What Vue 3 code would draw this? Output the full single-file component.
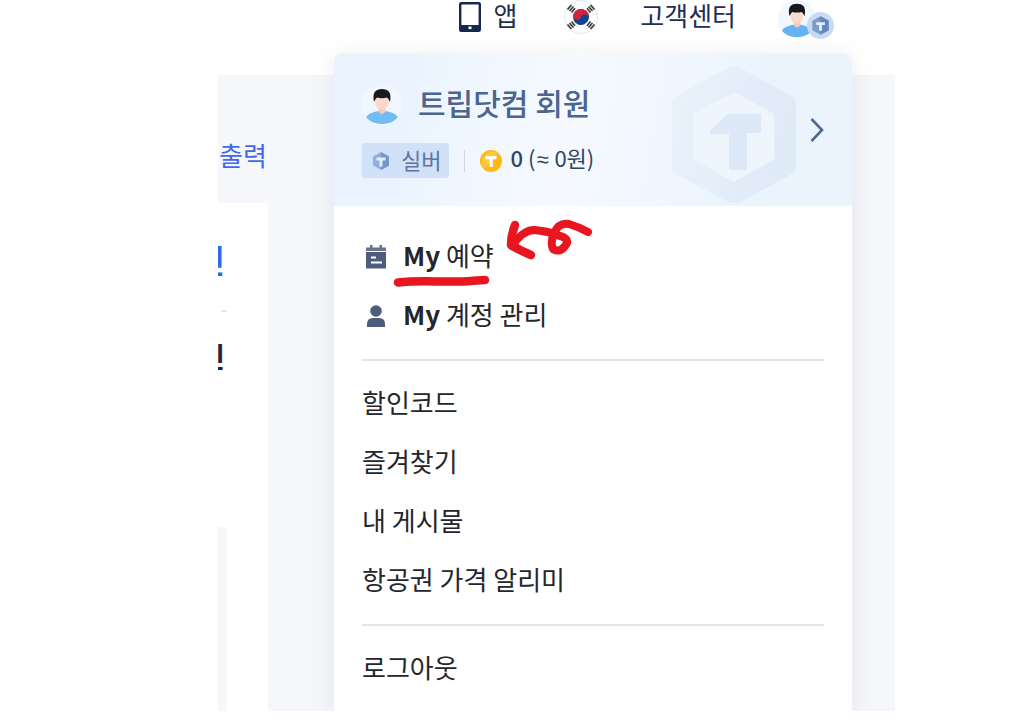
<script setup>
const primary = [
  { icon: 'calendar', brand: 'My', label: '예약' },
  { icon: 'person', brand: 'My', label: '계정 관리' },
]
const secondary = ['할인코드', '즐겨찾기', '내 게시물', '항공권 가격 알리미']
</script>

<template>
  <div class="stage">
    <header class="topbar">
      <a class="top-link app" href="#">
        <svg class="tablet" viewBox="0 0 22 30" aria-hidden="true">
          <rect x="1.2" y="1.2" width="19.6" height="27.6" rx="1" fill="#fff" stroke="#14284e" stroke-width="2.4" />
          <path d="M1 23h20v6H1z" fill="#14284e" />
          <rect x="9.5" y="24.5" width="3" height="2.6" fill="#fff" />
        </svg>
        <span>앱</span>
      </a>
      <button class="flag" type="button" aria-label="한국어">
        <svg viewBox="0 0 34 34" aria-hidden="true">
          <circle cx="17" cy="17" r="16.5" fill="#fdfdfd" stroke="#e6e7e9" />
          <g transform="rotate(20 17 17)">
            <circle cx="17" cy="17" r="8" fill="#134392" />
            <path d="M9 17a8 8 0 0 1 16 0a4 4 0 0 0-8 0a4 4 0 0 1-8 0z" fill="#d9213c" />
          </g>
          <g stroke="#3c3c3c" stroke-width="1.7">
            <path d="M3.5 9.5l4-4.5M5.5 11l4-4.5M7.5 12.5l3.5-4.2" />
            <path d="M30.5 9.5l-4-4.5M28.5 11l-4-4.5M26.5 12.5l-3.5-4.2" />
            <path d="M3.5 24.5l4 4.5M5.5 23l4 4.5M7.5 21.5l3.5 4.2" />
            <path d="M30.5 24.5l-4 4.5M28.5 23l-4 4.5M26.5 21.5l-3.5 4.2" />
          </g>
        </svg>
      </button>
      <a class="top-link" href="#">고객센터</a>
      <button class="account" type="button" aria-label="내 계정">
        <svg class="avatar" viewBox="0 0 40 40" aria-hidden="true">
          <circle cx="20" cy="20" r="20" fill="#f1f7fe" />
          <path d="M4 32c3-4 8-5 12-6h8c4 1 9 2 12 6c-4 5-10 7-16 7s-12-2-16-7z" fill="#64b3f3" />
          <path d="M16.5 20h7v6.500q-3.500 5-7 0z" fill="#f5c8b8" />
          <ellipse cx="20" cy="16.5" rx="6.8" ry="8.5" fill="#fbd9cc" />
          <path d="M12 17C10 7 14 4 20 4s10 3 8 13c-1-2-1.500-3-3-4.500c-3 1-7 1-10 0c-1.500 1.500-2 2.500-3 4.500z" fill="#17191e" />
        </svg>
        <svg class="badge" viewBox="0 0 28 28" aria-hidden="true">
          <circle cx="14" cy="14" r="14" fill="#c9daf4" />
          <path d="M14 4.500l8.500 4.700v9.600L14 23.500l-8.500-4.700V9.200z" fill="#7b9cca" />
          <path d="M14 4.500l8.500 4.700v9.600L14 23.500z" fill="#6588bb" />
          <path d="M9.500 10.500h9v3h-3v6h-3v-6h-3z" fill="#e4edfa" />
        </svg>
      </button>
    </header>

    <main class="page">
      <div class="print"><a href="#">출력</a></div>
      <section class="card">
        <p class="cut blue"><span>인</span></p>
        <p class="dash"></p>
        <p class="cut dark"><span>인</span></p>
        <p class="strip"></p>
      </section>
    </main>

    <aside class="menu">
      <a class="member" href="#">
        <svg class="watermark" viewBox="0 0 130 140" aria-hidden="true">
          <defs>
            <linearGradient id="ring" x1="0" y1="0" x2="1" y2="0.3">
              <stop offset="0" stop-color="#e4edf9" stop-opacity=".5" />
              <stop offset="1" stop-color="#dde8f6" stop-opacity=".8" />
            </linearGradient>
          </defs>
          <path d="M65 2q4-1 8 2l50 27q4 3 4 7v64q0 4-4 7l-50 27q-8 4-16 0L7 109q-4-3-4-7V38q0-4 4-7L57 4q4-3 8-2z" fill="url(#ring)" />
          <path d="M65 27l40 22v45L65 117L24 94V49z" fill="#eff5fd" />
          <path d="M41 65l18-16h33v19H78v37H60V69H41z" fill="#dde9f6" />
        </svg>
        <div class="identity">
          <svg class="avatar" viewBox="0 0 40 40" aria-hidden="true">
            <circle cx="20" cy="20" r="20" fill="#f1f7fe" />
            <path d="M4 32c3-4 8-5 12-6h8c4 1 9 2 12 6c-4 5-10 7-16 7s-12-2-16-7z" fill="#72bbf5" />
            <path d="M16.5 20h7v6.500q-3.500 5-7 0z" fill="#f5c8b8" />
            <ellipse cx="20" cy="16.5" rx="6.8" ry="8.5" fill="#fbd9cc" />
            <path d="M12 17C10 7 14 4 20 4s10 3 8 13c-1-2-1.500-3-3-4.500c-3 1-7 1-10 0c-1.500 1.500-2 2.500-3 4.500z" fill="#17191e" />
          </svg>
          <strong>트립닷컴 회원</strong>
        </div>
        <div class="status">
          <span class="tier">
            <svg viewBox="0 0 18 20" aria-hidden="true">
              <path d="M9 1l8 4.500v9L9 19l-8-4.500v-9z" fill="#93b0dc" />
              <path d="M9 1l8 4.500v9L9 19z" fill="#7596c7" />
              <path d="M4.500 6.500h9v3h-3v6h-3v-6h-3z" fill="#e4eefb" />
            </svg>
            <span class="text">실버</span>
          </span>
          <span class="bar"></span>
          <span class="coins">
            <svg viewBox="0 0 22 22" aria-hidden="true">
              <circle cx="11" cy="11" r="11" fill="#fdb813" />
              <path d="M4 19A11 11 0 0 1 18 3z" fill="#ffc93a" />
              <path d="M5.500 6h11v3.300h-3.700V17H9.500V9.300h-4z" fill="#fff" />
            </svg>
            <span class="text"><b>0</b> (<span class="approx">≈</span> 0원)</span>
          </span>
        </div>
        <svg class="chevron" viewBox="0 0 14 26" aria-hidden="true">
          <path d="M1.500 2L12 13L1.500 24" fill="none" stroke="#4f6a92" stroke-width="2.600" />
        </svg>
      </a>

      <nav class="links">
        <a v-for="item in primary" :key="item.icon" class="row" href="#">
          <svg v-if="item.icon === 'calendar'" class="icon" viewBox="0 0 22 24" aria-hidden="true">
            <path d="M1 2.500h4V0h2.500v2.500h7V0H17v2.500h4V6H1z" fill="#65738f" />
            <path d="M1 7h20v16.500H1z" fill="#4d5d7e" />
            <path d="M6 12.500h5M6 17.500h11" stroke="#fff" stroke-width="2.200" />
          </svg>
          <svg v-else class="icon" viewBox="0 0 22 24" aria-hidden="true">
            <circle cx="11" cy="7" r="5.8" fill="#4d5d7e" />
            <path d="M2 23v-3q0-6 6-6h6q6 0 6 6v3z" fill="#4d5d7e" />
          </svg>
          <span class="text"><b>{{ item.brand }}</b> {{ item.label }}</span>
        </a>
        <hr />
        <a v-for="label in secondary" :key="label" class="row" href="#"><span class="text">{{ label }}</span></a>
        <hr />
        <button class="row" type="button"><span class="text">로그아웃</span></button>
      </nav>

      <svg class="ink" viewBox="0 0 204 70" aria-hidden="true">
        <g fill="none" stroke="#e8161f" stroke-linecap="round" stroke-linejoin="round">
          <path d="M8 64.500C30 62 46 64 67 63.500S87 62 95 62" stroke-width="8.500" />
          <path d="M125 7Q121 17 121 27Q131 33 141 37" stroke-width="8.500" />
          <path d="M122 28Q133 12 144 12Q157 13 167 17Q179 20 177 25Q171 36 163 31Q160 25 164 15Q169 4 179 6Q189 9 198 14" stroke-width="8" />
        </g>
      </svg>
    </aside>
  </div>
</template>

<style>
body {
  background: #fff;
}
</style>

<style scoped>
.stage {
  display: grid;
  grid-template-rows: 75px auto;
  grid-template-columns: 1fr;
  margin: 0 129px 0 218px;
  overflow: hidden;
  color: #24262b;
  font: 26px/34px "Noto Sans CJK KR", "Noto Sans", sans-serif;
}
.stage svg {
  display: block;
  flex: none;
}
a {
  color: inherit;
  text-decoration: none;
}
button {
  padding: 0;
  border: 0;
  background: none;
  color: inherit;
  font: inherit;
}
p {
  margin: 0;
}
.text {
  padding-bottom: 4px;
}
.topbar {
  grid-area: 1 / 1;
  display: flex;
  align-items: flex-start;
  justify-content: flex-end;
  gap: 42px;
  padding-right: 61px;
  color: #1e2f52;
  line-height: 30px;
}
.top-link {
  display: flex;
  align-items: flex-start;
  gap: 12px;
}
.app {
  margin-right: 5px;
}
.tablet {
  width: 22px;
  height: 30px;
  padding-top: 2px;
}
.flag svg {
  width: 34px;
  height: 34px;
}
.account {
  position: relative;
  width: 56px;
  height: 38px;
}
.avatar {
  width: 40px;
  height: 40px;
}
.account .avatar {
  width: 38px;
  height: 38px;
}
.badge {
  position: absolute;
  right: 0;
  bottom: -1px;
  width: 27px;
  height: 27px;
}
.page {
  grid-area: 2 / 1;
  display: flex;
  flex-direction: column;
  align-items: flex-start;
  background: #f5f7fb;
}
.print {
  height: 128px;
  padding: 63px 0 0 1px;
  box-sizing: border-box;
  color: #4467f0;
}
.card {
  flex: 1;
  display: flex;
  flex-direction: column;
  width: 50px;
  padding-top: 36px;
  box-sizing: border-box;
  background: #fff;
}
.cut {
  display: flex;
  justify-content: flex-end;
  width: 7px;
  height: 40px;
  overflow: hidden;
  font-weight: 700;
  line-height: 40px;
}
.blue {
  color: #3268ef;
  font-size: 32px;
}
.dark {
  color: #22263a;
  font-size: 28px;
}
.dash {
  width: 6px;
  height: 2px;
  margin: 31px 0 24px 3px;
  background: #e5e6e8;
}
.strip {
  flex: 1;
  width: 9px;
  margin-top: 151px;
  background: #f5f7fb;
}
.menu {
  grid-area: 1 / 1 / 3 / 2;
  position: relative;
  margin: 53px 43px 0 116px;
  border-radius: 8px 8px 0 0;
  background: #fff;
  box-shadow: 0 4px 28px rgba(20, 30, 50, 0.08);
}
.member {
  position: relative;
  display: flex;
  flex-direction: column;
  gap: 18px;
  height: 153px;
  padding: 32px 28px 0;
  box-sizing: border-box;
  border-radius: 8px 8px 0 0;
  background: linear-gradient(100deg, #ebf4fe 15%, #f6fafe 45%, #f1f7fe 60%, #ebf4fd 80%);
}
.watermark {
  position: absolute;
  top: 12px;
  right: 53px;
  width: 130px;
  height: 140px;
}
.chevron {
  position: absolute;
  top: 64px;
  right: 28px;
  width: 14px;
  height: 26px;
}
.identity {
  display: flex;
  align-items: center;
  gap: 16px;
  height: 40px;
  color: #4b658e;
  font-size: 30px;
}
.identity strong {
  padding-bottom: 6px;
  font-weight: 500;
}
.status {
  display: flex;
  align-items: center;
  height: 35px;
  font-size: 22px;
}
.tier {
  display: flex;
  align-items: center;
  gap: 11px;
  height: 35px;
  padding: 0 8px 0 10px;
  border-radius: 3px;
  background: #d0e1f8;
  color: #5d759e;
}
.tier svg {
  width: 18px;
  height: 20px;
}
.bar {
  width: 1px;
  height: 22px;
  margin: 0 15px;
  background: #ccd7e5;
}
.coins {
  display: flex;
  align-items: center;
  gap: 8px;
  color: #304362;
}
.coins b {
  font-weight: 500;
}
.approx {
  margin: 0 1px;
  font-family: "Liberation Sans", sans-serif;
}
.coins svg {
  width: 22px;
  height: 22px;
}
.links {
  padding: 21px 28px 0;
}
.row {
  display: flex;
  align-items: center;
  width: 100%;
  height: 59px;
}
.row b {
  font-weight: 700;
}
.icon {
  width: 22px;
  height: 24px;
  margin: 0 16px 0 3px;
}
hr {
  height: 2px;
  margin: 14px 0 13px;
  border: 0;
  background: #e2e5ea;
}
.links .row:last-child {
  margin-bottom: 13px;
}
.ink {
  position: absolute;
  top: 165px;
  left: 56px;
  width: 204px;
  height: 70px;
}
</style>
